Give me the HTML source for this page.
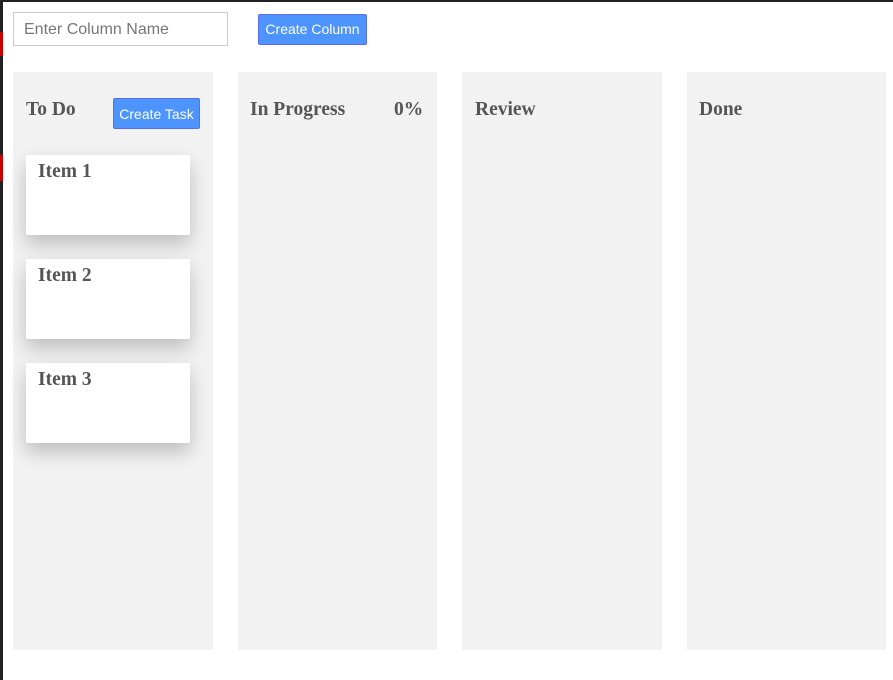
<!DOCTYPE html><html><head><style>
body{margin:0;width:893px;height:680px;background:#fff;position:relative;overflow:hidden;font-family:"Liberation Sans",sans-serif}
.bt{position:absolute;left:0;top:0;width:893px;height:2px;background:#222}
.bl{position:absolute;left:0;top:0;width:3px;height:680px;background:#222}
.red{position:absolute;left:0;width:3px;background:#c00}
.inp{position:absolute;left:13px;top:12px;width:215px;height:34px;border:1px solid #ccc;box-sizing:border-box;color:#777;font-size:16px;padding:9px 10px;line-height:16px}
.btn{position:absolute;background:#4d94ff;border:1px solid #5a6cf0;border-radius:2px;color:#fff;font-size:14px;box-sizing:border-box;text-align:center}
.col{position:absolute;top:72px;height:578px;background:#f2f2f2}
.h{position:absolute;top:99px;font-family:"Liberation Serif",serif;font-weight:bold;font-size:19.5px;color:#555}
.card{position:absolute;left:26px;width:164px;height:80px;background:#fff;box-shadow:0 9px 18px rgba(0,0,0,.22)}
.card span{position:absolute;left:12px;top:6px;font-family:"Liberation Serif",serif;font-weight:bold;font-size:19.5px;color:#555}
</style></head><body>
<div class="bt"></div><div class="bl"></div>
<div class="red" style="top:32px;height:24px"></div><div class="red" style="top:155px;height:26px"></div>
<div class="inp">Enter Column Name</div>
<div class="btn" style="left:258px;top:14px;width:109px;height:31px;line-height:29px">Create Column</div>
<div class="col" style="left:13px;width:200px"></div>
<div class="col" style="left:238px;width:199px"></div>
<div class="col" style="left:462px;width:200px"></div>
<div class="col" style="left:687px;width:199px"></div>
<div class="h" style="left:26px">To Do</div>
<div class="btn" style="left:113px;top:98px;width:87px;height:31px;line-height:31px">Create Task</div>
<div class="h" style="left:250px">In Progress</div>
<div class="h" style="left:394px">0%</div>
<div class="h" style="left:475px">Review</div>
<div class="h" style="left:699px">Done</div>
<div class="card" style="top:155px"><span>Item 1</span></div>
<div class="card" style="top:259px"><span>Item 2</span></div>
<div class="card" style="top:363px"><span>Item 3</span></div>
</body></html>
